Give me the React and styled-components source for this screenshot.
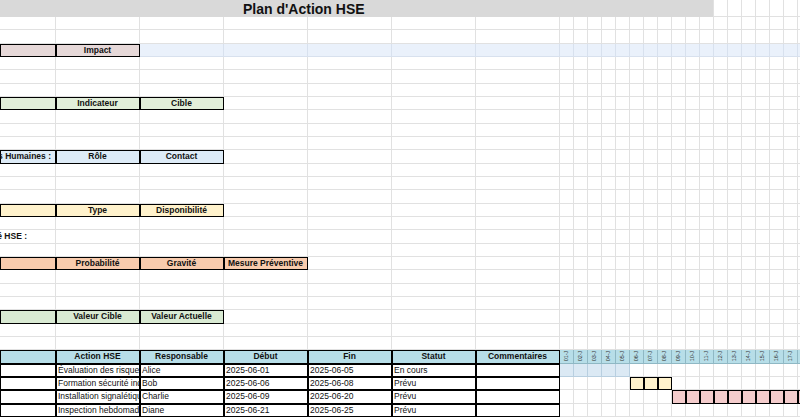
import React from "react";
import styled, { createGlobalStyle } from "styled-components";

const Global = createGlobalStyle`
  body { margin: 0; background: #fff; overflow: hidden; }
`;

const Sheet = styled.div`
  display: grid;
  grid-template-columns: 56px repeat(6, 84px) repeat(18, 14px);
  grid-template-rows: 17px repeat(30, 13.333px);
  width: 800px;
  height: 417px;
  overflow: hidden;
  font-family: "Liberation Sans", Arial, sans-serif;
  font-size: 8.5px;
  color: #111;
`;

const Cell = styled.div`
  box-sizing: border-box;
  display: flex;
  align-items: center;
  justify-content: ${({ $align }) => $align || "flex-start"};
  padding: 0 2px;
  white-space: nowrap;
  overflow: hidden;
  background: ${({ $bg }) => $bg || "#fff"};
  font-weight: ${({ $bold }) => ($bold ? 700 : 400)};
  border-right: 1px solid ${({ $line }) => $line || "#e1e1e1"};
  border-bottom: 1px solid ${({ $line }) => $line || "#e1e1e1"};
  ${({ $boxed }) => $boxed && "box-shadow: inset 1px 1px 0 #000; border-right-color: #000; border-bottom-color: #000;"}
`;

const Title = styled.div`
  grid-column: 1 / span 18;
  background: #d9d9d9;
  font-weight: 700;
  font-size: 14px;
  display: flex;
  align-items: center;
  padding-left: 243px;
  border-right: 1px solid #e1e1e1;
`;

const DayLabel = styled.span`
  display: inline-block;
  transform: rotate(-90deg);
  font-size: 5.5px;
  font-weight: 400;
  color: #333;
`;

const HEAD = "#b7dee8";
const sections = {
  3: { bg: "#e6d8d8", labels: ["Impact"] },
  7: { bg: "#e2efda", labels: ["Indicateur", "Cible"] },
  11: { bg: "#ddebf7", labels: ["Rôle", "Contact"], first: "Ressources Humaines :" },
  15: { bg: "#fff2cc", labels: ["Type", "Disponibilité"] },
  19: { bg: "#f8cbad", labels: ["Probabilité", "Gravité", "Mesure Préventive"] },
  23: { bg: "#d9ead3", labels: ["Valeur Cible", "Valeur Actuelle"] },
};

const tableHead = ["", "Action HSE", "Responsable", "Début", "Fin", "Statut", "Commentaires"];
const rows = [
  ["", "Évaluation des risques", "Alice", "2025-06-01", "2025-06-05", "En cours", ""],
  ["", "Formation sécurité incendie", "Bob", "2025-06-06", "2025-06-08", "Prévu", ""],
  ["", "Installation signalétique", "Charlie", "2025-06-09", "2025-06-20", "Prévu", ""],
  ["", "Inspection hebdomadaire", "Diane", "2025-06-21", "2025-06-25", "Prévu", ""],
];
const bars = [
  { from: 0, to: 4, bg: "#dbe9f4", line: "#b8cfe0" },
  { from: 5, to: 7, bg: "#fff2cc", line: "#000" },
  { from: 8, to: 30, bg: "#f4cccc", line: "#000" },
  null,
];

function renderCell(r, c) {
  const key = `${r}-${c}`;
  const sec = sections[r];
  if (sec) {
    if (c === 0)
      return (
        <Cell key={key} $bg={sec.bg} $boxed $bold $align="flex-end" style={{ paddingRight: 4 }}>
          {sec.first || ""}
        </Cell>
      );
    if (c <= sec.labels.length)
      return (
        <Cell key={key} $bg={sec.bg} $boxed $bold $align="center">
          {sec.labels[c - 1]}
        </Cell>
      );
    if (r === 3) return <Cell key={key} $bg="#eaf1fb" $line="#d8e1ee" />;
    return <Cell key={key} />;
  }
  if (r === 17 && c === 0)
    return (
      <Cell key={key} $bold $align="flex-end" style={{ paddingRight: 28 }}>
        Audit de conformité HSE :
      </Cell>
    );
  if (r === 26) {
    if (c < 7)
      return (
        <Cell key={key} $bg={HEAD} $boxed $bold $align="center">
          {tableHead[c]}
        </Cell>
      );
    return (
      <Cell key={key} $bg={HEAD} $line="#8fb8c4" $align="center" style={{ padding: 0 }}>
        <DayLabel>{String(c - 6).padStart(2, "0")}-J</DayLabel>
      </Cell>
    );
  }
  if (r >= 27 && r <= 30) {
    const i = r - 27;
    if (c < 7) return <Cell key={key} $boxed>{rows[i][c]}</Cell>;
    const b = bars[i];
    const g = c - 7;
    if (b && g >= b.from && g <= b.to)
      return <Cell key={key} $bg={b.bg} $line={b.line} style={b.line === "#000" ? { boxShadow: "inset 1px 1px 0 #000" } : undefined} />;
    return <Cell key={key} />;
  }
  return <Cell key={key} />;
}

export default function App() {
  const cells = [];
  for (let c = 18; c < 25; c++) cells.push(<Cell key={`0-${c}`} />);
  for (let r = 2; r <= 30; r++) for (let c = 0; c < 25; c++) cells.push(renderCell(r, c));
  for (let c = 0; c < 25; c++) cells.unshift(<Cell key={`1-${c}`} style={{ gridRow: 2 }} />);
  return (
    <>
      <Global />
      <Sheet>
        <Title style={{ gridRow: 1 }}>Plan d'Action HSE</Title>
        {cells}
      </Sheet>
    </>
  );
}
